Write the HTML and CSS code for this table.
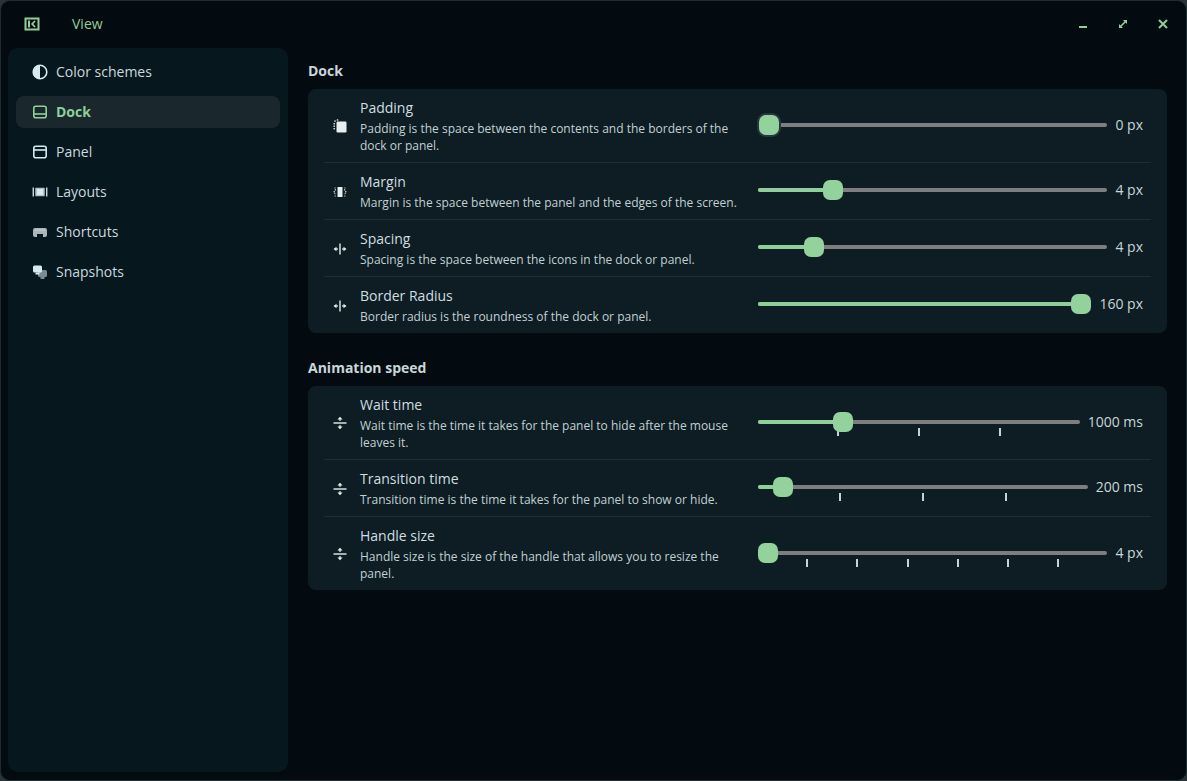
FILE: index.html
```html
<!DOCTYPE html>
<html lang="en">
<head>
<meta charset="utf-8">
<title>View</title>
<link rel="stylesheet" href="styles.css">
</head>
<body>
<div class="window">
  <header class="titlebar">
    <div class="title-left">
      <svg class="tb-icon" viewBox="0 0 16 16" width="16" height="16"><rect x="1.5" y="2.5" width="13" height="11" fill="none" stroke="#8fcf9a" stroke-width="2"/><rect x="4" y="4.5" width="2" height="7" fill="#8fcf9a"/><polyline points="11,5 8.2,8 11,11" fill="none" stroke="#8fcf9a" stroke-width="1.8"/></svg>
      <span class="title">View</span>
    </div>
    <div class="controls">
      <svg viewBox="0 0 12 12" width="12" height="12"><rect x="2" y="8" width="8" height="2" fill="#8fcf9a"/></svg>
      <svg viewBox="0 0 12 12" width="12" height="12"><path d="M2.5 9.5 L9.5 2.5" stroke="#8fcf9a" stroke-width="1.6"/><path d="M6 2 H10 V6 Z" fill="#8fcf9a"/><path d="M2 6 V10 H6 Z" fill="#8fcf9a"/></svg>
      <svg viewBox="0 0 12 12" width="12" height="12"><path d="M2 2 L10 10 M10 2 L2 10" stroke="#8fcf9a" stroke-width="2"/></svg>
    </div>
  </header>
  <div class="main">
    <nav class="sidebar">
      <div class="nav-item">
        <svg viewBox="0 0 16 16" width="16" height="16"><circle cx="8" cy="8" r="6.8" fill="none" stroke="#d6ebf1" stroke-width="1.6"/><path d="M8 1.2 A6.8 6.8 0 0 0 8 14.8 Z" fill="#d6ebf1"/></svg>
        <span>Color schemes</span>
      </div>
      <div class="nav-item active">
        <svg viewBox="0 0 16 16" width="16" height="16"><rect x="1.8" y="2.3" width="12.4" height="11.4" rx="2" fill="none" stroke="#8fcf9a" stroke-width="1.6"/><rect x="2" y="9.2" width="12" height="1.6" fill="#8fcf9a"/></svg>
        <span>Dock</span>
      </div>
      <div class="nav-item">
        <svg viewBox="0 0 16 16" width="16" height="16"><rect x="1.8" y="2.3" width="12.4" height="11.4" rx="2" fill="none" stroke="#d6ebf1" stroke-width="1.6"/><rect x="2" y="5.2" width="12" height="1.6" fill="#d6ebf1"/></svg>
        <span>Panel</span>
      </div>
      <div class="nav-item">
        <svg viewBox="0 0 16 16" width="16" height="16"><rect x="0.6" y="3.5" width="1.3" height="9" fill="#d6ebf1"/><rect x="14.1" y="3.5" width="1.3" height="9" fill="#d6ebf1"/><rect x="3.2" y="3.8" width="9.6" height="8.4" rx="0.8" fill="#aebcc1"/><rect x="4.8" y="5" width="6.4" height="6" fill="#d6ebf1"/></svg>
        <span>Layouts</span>
      </div>
      <div class="nav-item">
        <svg viewBox="0 0 16 16" width="16" height="16"><rect x="1" y="4" width="14" height="9" rx="2" fill="#aab5b9"/><rect x="5" y="10" width="6" height="3" fill="#07171e"/><rect x="2.5" y="5.5" width="11" height="1" fill="#c7d1d4"/></svg>
        <span>Shortcuts</span>
      </div>
      <div class="nav-item">
        <svg viewBox="0 0 16 16" width="16" height="16"><rect x="6" y="6" width="9" height="7" rx="1.5" fill="#7d8a8f"/><rect x="8.5" y="13" width="4" height="2" fill="#7d8a8f"/><rect x="1" y="1.5" width="9" height="7" rx="1.5" fill="#d6ebf1"/><rect x="3.5" y="8.5" width="4" height="2" fill="#d6ebf1"/></svg>
        <span>Snapshots</span>
      </div>
    </nav>
    <main class="content">
      <section class="section">
        <h2 class="heading">Dock</h2>
        <div class="card">
          <div class="row">
            <svg class="row-icon" viewBox="0 0 16 16" width="16" height="16"><rect x="4.5" y="3.5" width="10" height="11" rx="1.2" fill="#e6eef0"/><rect x="1.5" y="5" width="1.4" height="1.4" fill="#e6eef0"/><rect x="1.5" y="7.5" width="1.4" height="1.4" fill="#e6eef0"/><rect x="1.5" y="10" width="1.4" height="1.4" fill="#e6eef0"/><rect x="2.3" y="2.4" width="1.4" height="1.4" fill="#e6eef0"/><rect x="4.8" y="1.3" width="1.4" height="1.4" fill="#e6eef0"/></svg>
            <div class="text">
              <div class="r-title">Padding</div>
              <div class="r-desc">Padding is the space between the contents and the borders of the dock or panel.</div>
            </div>
            <div class="slider">
              <div class="track" style="--f:0">
                <div class="rail-area focused"><div class="rail"></div><div class="fill"></div><div class="thumb"></div></div>
              </div>
              <div class="value">0 px</div>
            </div>
          </div>
          <div class="row">
            <svg class="row-icon" viewBox="0 0 16 16" width="16" height="16"><rect x="5.5" y="3" width="5" height="10" fill="#e6eef0"/><path d="M3.6 5.4 L2 8 L3.6 10.6" fill="none" stroke="#e6eef0" stroke-width="1.1" stroke-dasharray="1.1 0.9"/><path d="M12.4 5.4 L14 8 L12.4 10.6" fill="none" stroke="#e6eef0" stroke-width="1.1" stroke-dasharray="1.1 0.9"/><rect x="2.6" y="3.5" width="1" height="1" fill="#e6eef0"/><rect x="2.6" y="11.5" width="1" height="1" fill="#e6eef0"/><rect x="12.4" y="3.5" width="1" height="1" fill="#e6eef0"/><rect x="12.4" y="11.5" width="1" height="1" fill="#e6eef0"/></svg>
            <div class="text">
              <div class="r-title">Margin</div>
              <div class="r-desc">Margin is the space between the panel and the edges of the screen.</div>
            </div>
            <div class="slider">
              <div class="track" style="--f:0.197">
                <div class="rail-area"><div class="rail"></div><div class="fill"></div><div class="thumb"></div></div>
              </div>
              <div class="value">4 px</div>
            </div>
          </div>
          <div class="row">
            <svg class="row-icon" viewBox="0 0 16 16" width="16" height="16"><rect x="7.3" y="2.5" width="1.4" height="11" fill="#e6eef0"/><path d="M1.5 8 L4.5 5.8 V10.2 Z" fill="#e6eef0"/><path d="M14.5 8 L11.5 5.8 V10.2 Z" fill="#e6eef0"/><rect x="3.5" y="7.4" width="2.5" height="1.2" fill="#e6eef0"/><rect x="10" y="7.4" width="2.5" height="1.2" fill="#e6eef0"/></svg>
            <div class="text">
              <div class="r-title">Spacing</div>
              <div class="r-desc">Spacing is the space between the icons in the dock or panel.</div>
            </div>
            <div class="slider">
              <div class="track" style="--f:0.139">
                <div class="rail-area"><div class="rail"></div><div class="fill"></div><div class="thumb"></div></div>
              </div>
              <div class="value">4 px</div>
            </div>
          </div>
          <div class="row">
            <svg class="row-icon" viewBox="0 0 16 16" width="16" height="16"><rect x="7.3" y="2.5" width="1.4" height="11" fill="#e6eef0"/><path d="M1.5 8 L4.5 5.8 V10.2 Z" fill="#e6eef0"/><path d="M14.5 8 L11.5 5.8 V10.2 Z" fill="#e6eef0"/><rect x="3.5" y="7.4" width="2.5" height="1.2" fill="#e6eef0"/><rect x="10" y="7.4" width="2.5" height="1.2" fill="#e6eef0"/></svg>
            <div class="text">
              <div class="r-title">Border Radius</div>
              <div class="r-desc">Border radius is the roundness of the dock or panel.</div>
            </div>
            <div class="slider">
              <div class="track" style="--f:1">
                <div class="rail-area"><div class="rail"></div><div class="fill"></div><div class="thumb"></div></div>
              </div>
              <div class="value">160 px</div>
            </div>
          </div>
        </div>
      </section>
      <section class="section">
        <h2 class="heading">Animation speed</h2>
        <div class="card">
          <div class="row">
            <svg class="row-icon" viewBox="0 0 16 16" width="16" height="16"><rect x="1.5" y="7.3" width="13" height="1.4" fill="#e6eef0"/><path d="M8 1.8 L10.6 4.6 H5.4 Z" fill="#e6eef0"/><rect x="7.4" y="4" width="1.2" height="2" fill="#e6eef0"/><path d="M8 14.2 L10.6 11.4 H5.4 Z" fill="#e6eef0"/><rect x="7.4" y="10" width="1.2" height="2" fill="#e6eef0"/></svg>
            <div class="text">
              <div class="r-title">Wait time</div>
              <div class="r-desc">Wait time is the time it takes for the panel to hide after the mouse leaves it.</div>
            </div>
            <div class="slider">
              <div class="track" style="--f:0.25">
                <div class="rail-area"><div class="rail"></div><div class="fill"></div><div class="thumb"></div></div>
                <div class="ticks"><i></i><i></i><i></i></div>
              </div>
              <div class="value">1000 ms</div>
            </div>
          </div>
          <div class="row">
            <svg class="row-icon" viewBox="0 0 16 16" width="16" height="16"><rect x="1.5" y="7.3" width="13" height="1.4" fill="#e6eef0"/><path d="M8 1.8 L10.6 4.6 H5.4 Z" fill="#e6eef0"/><rect x="7.4" y="4" width="1.2" height="2" fill="#e6eef0"/><path d="M8 14.2 L10.6 11.4 H5.4 Z" fill="#e6eef0"/><rect x="7.4" y="10" width="1.2" height="2" fill="#e6eef0"/></svg>
            <div class="text">
              <div class="r-title">Transition time</div>
              <div class="r-desc">Transition time is the time it takes for the panel to show or hide.</div>
            </div>
            <div class="slider">
              <div class="track" style="--f:0.05">
                <div class="rail-area"><div class="rail"></div><div class="fill"></div><div class="thumb"></div></div>
                <div class="ticks"><i></i><i></i><i></i></div>
              </div>
              <div class="value">200 ms</div>
            </div>
          </div>
          <div class="row">
            <svg class="row-icon" viewBox="0 0 16 16" width="16" height="16"><rect x="1.5" y="7.3" width="13" height="1.4" fill="#e6eef0"/><path d="M8 1.8 L10.6 4.6 H5.4 Z" fill="#e6eef0"/><rect x="7.4" y="4" width="1.2" height="2" fill="#e6eef0"/><path d="M8 14.2 L10.6 11.4 H5.4 Z" fill="#e6eef0"/><rect x="7.4" y="10" width="1.2" height="2" fill="#e6eef0"/></svg>
            <div class="text">
              <div class="r-title">Handle size</div>
              <div class="r-desc">Handle size is the size of the handle that allows you to resize the panel.</div>
            </div>
            <div class="slider">
              <div class="track" style="--f:0">
                <div class="rail-area"><div class="rail"></div><div class="fill"></div><div class="thumb"></div></div>
                <div class="ticks"><i></i><i></i><i></i><i></i><i></i><i></i></div>
              </div>
              <div class="value">4 px</div>
            </div>
          </div>
        </div>
      </section>
    </main>
  </div>
</div>
</body>
</html>
```

FILE: styles.css
```css
* { box-sizing: border-box; }
html, body { margin: 0; padding: 0; }
body {
  background: #2a3438;
  font-family: "Open Sans", "Noto Sans", sans-serif;
  color: #c9d6da;
  width: 1187px;
  height: 781px;
  overflow: hidden;
}
.window {
  width: 1187px;
  height: 781px;
  background: #030b10;
  border: 1px solid #1f2c31;
  border-radius: 10px;
  display: flex;
  flex-direction: column;
  overflow: hidden;
}
.titlebar {
  height: 47px;
  flex: none;
  display: flex;
  align-items: center;
  justify-content: space-between;
  padding: 0 17px 2px 23px;
}
.title-left { display: flex; align-items: center; gap: 32px; }
.tb-icon { display: block; }
.title { color: #8fcf9a; font-size: 14px; line-height: 20px; }
.controls { display: flex; align-items: center; gap: 28px; }
.controls svg { display: block; }
.main {
  flex: 1;
  display: flex;
  gap: 20px;
  padding: 0 19px 8px 7px;
  min-height: 0;
}
.sidebar {
  width: 280px;
  flex: none;
  background: #07171e;
  border-radius: 10px;
  padding: 8px;
  display: flex;
  flex-direction: column;
  gap: 8px;
}
.nav-item {
  height: 32px;
  display: flex;
  align-items: center;
  gap: 8px;
  padding-left: 16px;
  padding-bottom: 1px;
  border-radius: 8px;
  font-size: 14px;
  color: #cbd9de;
}
.nav-item svg { display: block; flex: none; margin-top: 1px; }
.nav-item.active {
  background: #1a282d;
  color: #8fcf9a;
  font-weight: 700;
}
.content {
  flex: 1;
  display: flex;
  flex-direction: column;
  gap: 25px;
  padding-top: 13px;
}
.heading {
  margin: 0 0 8px;
  font-size: 14px;
  line-height: 20px;
  font-weight: 700;
  color: #c9d6da;
}
.card {
  background: #0d1d23;
  border-radius: 8px;
  padding: 0 16px;
}
.row {
  display: flex;
  align-items: center;
  padding: 9px 8px 8px 8px;
  border-bottom: 1px solid #1f2e34;
}
.row:last-child { border-bottom: none; }
.row-icon { display: block; flex: none; margin-right: 12px; }
.text { flex: 1; min-width: 0; padding-right: 8px; }
.r-title { font-size: 14px; line-height: 20px; color: #d0dde1; }
.r-desc { font-size: 12px; line-height: 17px; margin-top: 2px; color: #c2d0d4; }
.slider {
  width: 385px;
  flex: none;
  display: flex;
  align-items: flex-start;
  gap: 8px;
}
.track { flex: 1; position: relative; }
.rail-area { position: relative; height: 22px; }
.rail-area:only-child { margin-bottom: 3px; }
.rail {
  position: absolute;
  left: 0; right: 0; top: 9px;
  height: 4px;
  border-radius: 2px;
  background: #7e7e7e;
}
.fill {
  position: absolute;
  left: 0; top: 9px;
  height: 4px;
  border-radius: 2px;
  background: #8fcf9a;
  width: calc(var(--f) * (100% - 20px) + 10px);
}
.thumb {
  position: absolute;
  top: 1px;
  left: calc(var(--f) * (100% - 20px));
  width: 20px;
  height: 20px;
  border-radius: 7px;
  background: #93d19d;
  z-index: 1;
}
.rail-area.focused .thumb { left: 1px; box-shadow: 0 0 0 2px #25383e; }
.ticks {
  display: flex;
  justify-content: space-evenly;
  height: 8px;
  margin-top: -5px;
}
.ticks i {
  display: block;
  width: 2px;
  height: 8px;
  background: #c2d3d9;
}
.value {
  font-size: 14px;
  line-height: 22px;
  color: #c9d6da;
  white-space: nowrap;
}
```
